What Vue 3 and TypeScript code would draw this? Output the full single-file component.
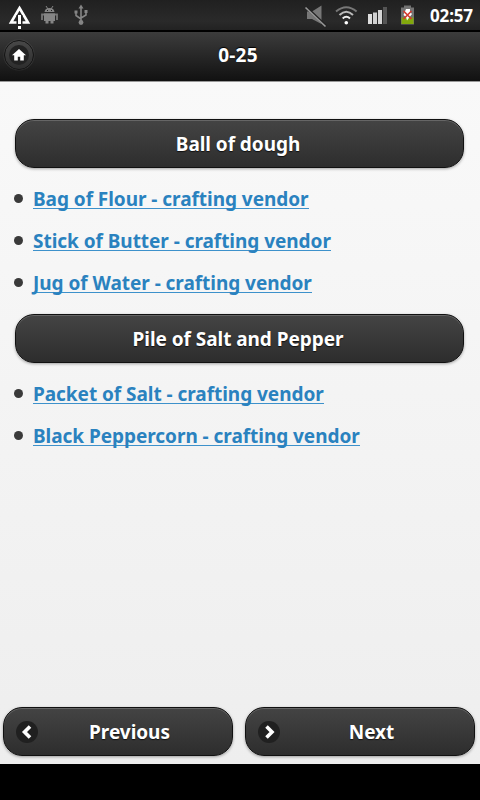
<script setup lang="ts">
interface Section {
  title: string;
  items: string[];
}

const title = "0-25";

const sections: Section[] = [
  {
    title: "Ball of dough",
    items: [
      "Bag of Flour - crafting vendor",
      "Stick of Butter - crafting vendor",
      "Jug of Water - crafting vendor",
    ],
  },
  {
    title: "Pile of Salt and Pepper",
    items: [
      "Packet of Salt - crafting vendor",
      "Black Peppercorn - crafting vendor",
    ],
  },
];
</script>

<template>
  <div class="screen">
    <div class="status">
      <svg class="status-icons" width="100" height="30" viewBox="0 0 100 30">
        <path d="M19.5 8 L28 22.5 H11 Z" fill="none" stroke="#fff" stroke-width="2.6" />
        <path d="M16.5 21 V15 H22.5 V25 H16.5 Z" fill="#222" />
        <path d="M18 15 H21 V24 H18 Z M18 26 H21 V29 H18 Z" fill="#fff" />
        <g fill="#858585">
          <path d="M44.5 12 Q45 8 49.5 8 Q54 8 54.5 12 Z" />
          <path d="M44 13.2 H55 V21 H44 Z M45.5 20.5 H48.5 V23.5 H45.5 Z M50.5 20.5 H53.5 V23.5 H50.5 Z" />
          <path d="M46 6 L48 9 M53 6 L51 9" stroke="#858585" stroke-width="1" />
        </g>
        <path d="M44 14.5 H42 V20 M55 14.5 H57 V20" fill="none" stroke="#777" stroke-width="1.8" />
        <path d="M47 10.5 h1 M51 10.5 h1" stroke="#222" />
        <g fill="none" stroke="#858585" stroke-width="1.6">
          <path d="M81 7 V22 M76 12.5 V15.5 L81 19 M86 11 V15 L81 18" />
        </g>
        <path d="M81 4.5 L83.5 8.5 H78.5 Z M74.5 10.5 h3 v3 h-3 Z M84.5 10 h3 v3 h-3 Z" fill="#858585" />
        <circle cx="81" cy="22.5" r="2.4" fill="#858585" />
      </svg>
      <svg class="status-icons" width="125" height="30" viewBox="300 0 125 30">
        <path d="M307 11.5 H312 L321.5 5.5 V24 L312 19 H307 Z" fill="#777" />
        <path d="M306.5 7.5 L326.5 26.5" stroke="#222" stroke-width="2.6" />
        <path d="M305.5 7.5 L325.5 26.5" stroke="#999" stroke-width="1.6" />
        <g fill="none" stroke-width="2">
          <path d="M336 11.5 Q346.3 3 356.6 11.5" stroke="#777" />
          <path d="M339.5 15 Q346.3 8.5 353 15" stroke="#bbb" />
          <path d="M342.7 18.5 Q346.3 15 350 18.5" stroke="#eee" />
        </g>
        <circle cx="346.3" cy="22.8" r="1.8" fill="#fff" />
        <path d="M368 14 h4 v10 h-4 Z" fill="#ddd" />
        <path d="M373 12.5 h4 v11.5 h-4 Z" fill="#d0d0d0" />
        <path d="M378 10 h4 v14 h-4 Z" fill="#d5d5d5" />
        <path d="M383 7 h4 v17 h-4 Z" fill="#555" />
        <path d="M404 5.5 h7 v2 h3 v17 h-13 v-17 h3 Z" fill="#737373" />
        <path d="M401.5 17.5 H413.5 V24 H401.5 Z" fill="#82a80c" />
        <path d="M406 9 H410 V12 L412 14 L407 20.5 L406 17 L403.5 15 Z" fill="#fff" />
        <path d="M403.5 11 L411.5 19 M411.5 11 L403.5 19" stroke="#d33b30" stroke-width="1.7" />
      </svg>
      <span class="clock">02:57</span>
    </div>

    <header class="header">
      <button class="home" aria-label="Home">
        <svg width="30" height="30" viewBox="0 0 30 30">
          <circle cx="15" cy="15" r="10" fill="#222" />
          <path d="M15 9 L22 15.2 H19.8 V20.5 H16.2 V16.8 H13.8 V20.5 H10.2 V15.2 H8 Z" fill="#fff" />
        </svg>
      </button>
      <h1 class="title">{{ title }}</h1>
    </header>

    <main class="content">
      <section v-for="section in sections" :key="section.title" class="section">
        <button class="btn">{{ section.title }}</button>
        <ul class="list">
          <li v-for="item in section.items" :key="item" class="item">
            <a class="link">{{ item }}</a>
          </li>
        </ul>
      </section>
    </main>

    <footer class="footer">
      <button class="btn nav">
        <svg class="nav-icon" width="22" height="22" viewBox="0 0 22 22">
          <circle cx="11" cy="11" r="11" fill="#202020" />
          <path d="M14 5.5 L8.5 11 L14 16.5" fill="none" stroke="#fff" stroke-width="3.6" />
        </svg>
        <span class="nav-label">Previous</span>
      </button>
      <button class="btn nav">
        <svg class="nav-icon" width="22" height="22" viewBox="0 0 22 22">
          <circle cx="11" cy="11" r="11" fill="#202020" />
          <path d="M8.5 5.5 L14 11 L8.5 16.5" fill="none" stroke="#fff" stroke-width="3.6" />
        </svg>
        <span class="nav-label">Next</span>
      </button>
    </footer>
    <div class="bottom"></div>
  </div>
</template>

<style>
body {
  background: #000;
}
</style>

<style scoped>
.screen {
  display: flex;
  flex-direction: column;
  width: 480px;
  height: 800px;
  overflow: hidden;
  font-family: "Noto Sans", "Open Sans", sans-serif;
  font-weight: 700;
  background: linear-gradient(#f9f9f9 81px, #eee 764px);
}

.status {
  display: flex;
  align-items: center;
  height: 30px;
  background: linear-gradient(#202020, #2a2a2a 70%, #222);
}

.status-icons:nth-child(2) {
  margin-left: 200px;
}

.clock {
  margin-left: 5px;
  padding-top: 2px;
  color: #fff;
  font-size: 17px;
  line-height: 30px;
  letter-spacing: -0.15px;
}

.header {
  display: flex;
  align-items: center;
  box-sizing: border-box;
  height: 52px;
  border-top: 2px solid #000;
  border-bottom: 1px solid #999;
  background: linear-gradient(#3c3c3c, #111);
}

.home {
  flex: none;
  box-sizing: border-box;
  width: 30px;
  height: 30px;
  margin: 0 0 3px 4px;
  padding: 0;
  border: 1px solid #151515;
  border-radius: 50%;
  background: linear-gradient(#484848, #2d2d2d);
  box-shadow: 0 0 1px #777;
}

.home svg {
  display: block;
  margin: -1px;
}

.title {
  flex: 1;
  margin: 0 38px 3px 0;
  text-align: center;
  color: #fff;
  font-size: 19px;
  line-height: 26px;
  letter-spacing: 0.2px;
  text-shadow: 0 -1px 1px #000;
}

.content {
  flex: 1;
  padding: 37px 16px 0 15px;
}

.section {
  margin-bottom: 10px;
}

.btn {
  display: block;
  box-sizing: border-box;
  width: 100%;
  height: 49px;
  padding: 0 3px 0 0;
  border: 1px solid #111;
  border-radius: 19px;
  color: #fff;
  font: inherit;
  font-size: 19px;
  line-height: 26px;
  letter-spacing: -0.05px;
  text-align: center;
  text-shadow: 0 1px 1px #111;
  background: linear-gradient(#444, #2d2d2d);
  box-shadow: inset 0 1px 0 #666, 0 1px 3px rgba(0, 0, 0, 0.35);
}

.list {
  margin: 0;
  padding: 9px 0 0;
  list-style: none;
}

.item {
  display: flex;
  align-items: center;
  height: 42.4px;
}

.item::before {
  content: "";
  box-sizing: border-box;
  width: 9px;
  height: 9px;
  margin: 0 10px 0 -1px;
  border-radius: 50%;
  background: #3a3a3a;
}

.link {
  height: 23px;
  margin-bottom: 2px;
  box-sizing: border-box;
  border-bottom: 1px solid #3d91cb;
  color: #2a82bf;
  font-size: 19px;
  line-height: 26px;
  letter-spacing: -0.04px;
  white-space: nowrap;
}

.footer {
  display: flex;
  gap: 12px;
  height: 57px;
  padding: 0 5px 0 3px;
}

.nav {
  display: flex;
  align-items: center;
  flex: 1;
  padding: 0 11px 0 12px;
}

.nav-icon {
  flex: none;
}

.nav-label {
  flex: 1;
}

.bottom {
  height: 36px;
  background: #000;
}
</style>
